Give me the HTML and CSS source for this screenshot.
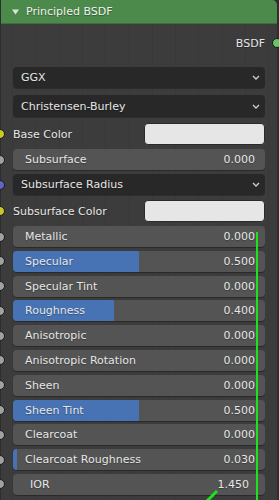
FILE: index.html
```html
<!DOCTYPE html>
<html lang="en">
<head>
    <meta charset="UTF-8">
    <meta name="viewport" content="width=device-width, initial-scale=1.0">
    <title>Principled BSDF</title>
    <link rel="stylesheet" href="styles.css">
</head>
<body>
    <div class="node">
        <div class="node-header">
            <svg class="collapse" width="7" height="6" viewBox="0 0 7 6"><polygon points="0,0.5 7,0.5 3.5,5.5" fill="#d8e6d8"/></svg>
            <span>Principled BSDF</span>
        </div>

        <div class="node-body">
            <div class="output-row">
                <span>BSDF</span>
                <span class="socket socket-out socket-shader"></span>
            </div>

            <div class="dropdown first">
                <span>GGX</span>
                <svg class="chevron" width="8" height="5" viewBox="0 0 8 5"><polyline points="1,1 4,4 7,1" fill="none" stroke="#d0d0d0" stroke-width="1.3"/></svg>
            </div>
            <div class="dropdown second">
                <span>Christensen-Burley</span>
                <svg class="chevron" width="8" height="5" viewBox="0 0 8 5"><polyline points="1,1 4,4 7,1" fill="none" stroke="#d0d0d0" stroke-width="1.3"/></svg>
            </div>

            <div class="color-row base">
                <span class="socket socket-color"></span>
                <span>Base Color</span>
                <div class="swatch"></div>
            </div>

            <div class="slider subsurface">
                <span class="socket socket-float"></span>
                <span class="label">Subsurface</span>
                <span class="value">0.000</span>
            </div>

            <div class="dropdown radius">
                <span class="socket socket-vector"></span>
                <span>Subsurface Radius</span>
                <svg class="chevron" width="8" height="5" viewBox="0 0 8 5"><polyline points="1,1 4,4 7,1" fill="none" stroke="#d0d0d0" stroke-width="1.3"/></svg>
            </div>

            <div class="color-row sub-color">
                <span class="socket socket-color"></span>
                <span>Subsurface Color</span>
                <div class="swatch"></div>
            </div>

            <div class="slider metallic">
                <span class="socket socket-float"></span>
                <span class="label">Metallic</span>
                <span class="value">0.000</span>
            </div>
            <div class="slider">
                <span class="socket socket-float"></span>
                <div class="fill" style="width: 50%"></div>
                <span class="label">Specular</span>
                <span class="value">0.500</span>
            </div>
            <div class="slider">
                <span class="socket socket-float"></span>
                <span class="label">Specular Tint</span>
                <span class="value">0.000</span>
            </div>
            <div class="slider">
                <span class="socket socket-float"></span>
                <div class="fill" style="width: 40%"></div>
                <span class="label">Roughness</span>
                <span class="value">0.400</span>
            </div>
            <div class="slider">
                <span class="socket socket-float"></span>
                <span class="label">Anisotropic</span>
                <span class="value">0.000</span>
            </div>
            <div class="slider">
                <span class="socket socket-float"></span>
                <span class="label">Anisotropic Rotation</span>
                <span class="value">0.000</span>
            </div>
            <div class="slider">
                <span class="socket socket-float"></span>
                <span class="label">Sheen</span>
                <span class="value">0.000</span>
            </div>
            <div class="slider">
                <span class="socket socket-float"></span>
                <div class="fill" style="width: 50%"></div>
                <span class="label">Sheen Tint</span>
                <span class="value">0.500</span>
            </div>
            <div class="slider">
                <span class="socket socket-float"></span>
                <span class="label">Clearcoat</span>
                <span class="value">0.000</span>
            </div>
            <div class="slider">
                <span class="socket socket-float"></span>
                <div class="fill" style="width: 1.6%"></div>
                <span class="label">Clearcoat Roughness</span>
                <span class="value">0.030</span>
            </div>
            <div class="slider number">
                <span class="socket socket-float"></span>
                <span class="label">IOR</span>
                <span class="value">1.450</span>
            </div>
        </div>
    </div>

    <!-- link wire drawn over the node -->
    <svg class="links" width="279" height="500" viewBox="0 0 279 500">
        <line x1="257" y1="232" x2="257" y2="500" stroke="#1fe21f" stroke-width="2"/>
        <line x1="205" y1="503" x2="217" y2="491" stroke="#1fe21f" stroke-width="3"/>
    </svg>
</body>
</html>
```

FILE: styles.css
```css
* {
    box-sizing: border-box;
}

body {
    margin: 0;
    position: relative;
    width: 279px;
    height: 500px;
    overflow: hidden;
    background-color: #2e2e2e;
    font-family: "DejaVu Sans", sans-serif;
    font-size: 11px;
    color: #e6e6e6;
}

.node {
    margin-left: 1px;
    width: 276px;
    height: 500px;
    border-radius: 0 5px 0 0;
    background-color: #3c3c3c;
    background-image:
        repeating-linear-gradient(90deg, transparent 0 11px, rgba(0,0,0,0.06) 11px 12px, transparent 12px 23.3px);
}

.node-header {
    height: 24px;
    display: flex;
    align-items: center;
    padding-left: 11px;
    gap: 7px;
    background-color: #4c8a4c;
    border-radius: 0 5px 0 0;
    border-bottom: 1px solid #3f6f3f;
    color: #eef2ee;
    text-shadow: 0 1px 1px rgba(0,0,0,0.35);
}

.collapse {
    margin-top: 1px;
}

.node-body {
    padding: 0 12px;
}

.node-body span {
    text-shadow: 0 1px 1px rgba(0,0,0,0.3);
}

/* sockets sit on the node edge */
.socket {
    position: absolute;
    top: 50%;
    left: -18px;
    width: 10px;
    height: 10px;
    margin-top: -5px;
    border-radius: 50%;
    border: 1px solid #1a1a1a;
}

.socket-out {
    left: auto;
    right: -17px;
}

.socket-shader { background-color: #63c763; }
.socket-color { background-color: #c7c729; }
.socket-vector { background-color: #6363c7; }
.socket-float { background-color: #a1a1a1; }

.output-row {
    position: relative;
    height: 22px;
    margin-top: 8px;
    display: flex;
    justify-content: flex-end;
    align-items: center;
}

.dropdown {
    position: relative;
    height: 21px;
    display: flex;
    align-items: center;
    justify-content: space-between;
    padding: 0 5px 0 8px;
    background-color: #282828;
    border-radius: 4px;
    box-shadow: 0 1px 0 rgba(0,0,0,0.25);
}

.dropdown.first { margin-top: 13px; }
.dropdown.second { margin-top: 7px; height: 22px; }
.dropdown.radius { margin-top: 4px; }

.color-row {
    position: relative;
    height: 22px;
    display: flex;
    align-items: center;
    justify-content: space-between;
}

.color-row.base { margin-top: 6px; }
.color-row.sub-color { margin-top: 5px; }

.swatch {
    width: 121px;
    height: 22px;
    background-color: #e6e6e6;
    border-radius: 4px;
    border: 1px solid #2a2a2a;
}

.slider {
    position: relative;
    height: 21px;
    margin-top: 3.8px;
    display: flex;
    align-items: center;
    justify-content: space-between;
    padding: 0 10px 0 12px;
    background-color: #545454;
    border-radius: 4px;
    box-shadow: 0 1px 0 rgba(0,0,0,0.3);
}

.slider.subsurface { margin-top: 4px; }
.slider.metallic { margin-top: 4px; }

.slider .fill {
    position: absolute;
    top: 0;
    left: 0;
    bottom: 0;
    background-color: #4772b3;
    border-radius: 4px 0 0 4px;
}

.slider .label,
.slider .value {
    position: relative;
}

.slider.number {
    padding: 0 16px 0 17px;
}

.links {
    position: absolute;
    top: 0;
    left: 0;
    pointer-events: none;
}
```
